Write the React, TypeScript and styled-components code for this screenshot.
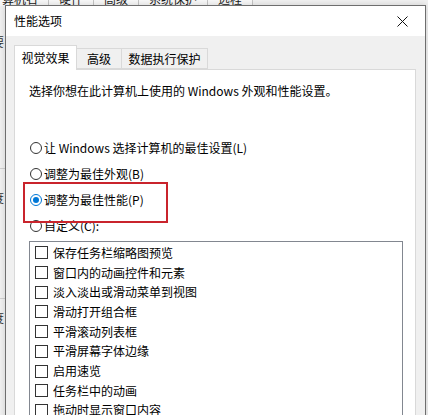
import styled, { createGlobalStyle } from "styled-components";

const GlobalStyle = createGlobalStyle`
  html, body {
    margin: 0;
    padding: 0;
    background: #f0f0f0;
  }
  * {
    box-sizing: border-box;
  }
`;

const FONT = `"Noto Sans CJK SC", "Noto Sans", sans-serif`;

const Desktop = styled.div`
  position: relative;
  width: 428px;
  height: 415px;
  overflow: hidden;
  background: #f0f0f0;
  font-family: ${FONT};
  font-size: 12px;
  color: #000;
`;

/* the system properties window lying behind the dialog */
const BackTabs = styled.div`
  position: absolute;
  top: -9px;
  left: -20px;
  display: flex;
  height: 15px;
`;

const BackTab = styled.div`
  padding: 0 10px;
  line-height: 15px;
  border-right: 1px solid #c4c4c4;
  background: #f7f7f7;
  color: #1a1a1a;
`;

const BackGlyph = styled.span<{ $top: number }>`
  position: absolute;
  left: -8px;
  top: ${({ $top }) => $top}px;
  line-height: 14px;
  color: #333;
`;

const BackEdge = styled.div<{ $top: number }>`
  position: absolute;
  left: 0;
  width: 5px;
  top: ${({ $top }) => $top}px;
  border-top: 1px solid #d0d0d0;
`;

const Dialog = styled.div`
  position: absolute;
  left: 5px;
  top: 5px;
  width: 421px;
  height: 440px;
  border: 1px solid #6e6e6e;
  background: #f0f0f0;
  display: flex;
  flex-direction: column;
  box-shadow: 0 0 6px rgba(0, 0, 0, 0.15);
`;

const TitleBar = styled.div`
  height: 30px;
  flex-shrink: 0;
  background: #fff;
  display: flex;
  align-items: center;
  justify-content: space-between;
  padding-left: 8px;
`;

const Title = styled.span`
  line-height: 16px;
`;

const CloseButton = styled.div`
  width: 46px;
  height: 30px;
  display: flex;
  align-items: center;
  justify-content: center;
`;

const Body = styled.div`
  flex: 1;
  padding: 9px 9px 0 8px;
  display: flex;
  flex-direction: column;
`;

const TabRow = styled.div`
  display: flex;
  align-items: flex-end;
  height: 24px;
  position: relative;
  z-index: 1;
`;

const Tab = styled.div<{ $active?: boolean; $width: number }>`
  width: ${({ $width }) => $width}px;
  height: ${({ $active }) => ($active ? 25 : 21)}px;
  margin-bottom: ${({ $active }) => ($active ? -1 : 0)}px;
  display: flex;
  justify-content: center;
  align-items: ${({ $active }) => ($active ? "flex-start" : "center")};
  padding-top: ${({ $active }) => ($active ? 4 : 0)}px;
  line-height: 16px;
  background: ${({ $active }) => ($active ? "#fff" : "#f0f0f0")};
  border: 1px solid #d9d9d9;
  border-bottom: ${({ $active }) => ($active ? "none" : "1px solid #d9d9d9")};
  margin-left: -1px;
  &:first-child {
    margin-left: 0;
  }
`;

const Panel = styled.div`
  position: relative;
  flex: 1;
  background: #fff;
  border: 1px solid #d9d9d9;
  padding: 13px 12px 0 14px;
`;

const Description = styled.p`
  margin: 0;
  line-height: 16px;
`;

const RadioGroup = styled.div`
  margin-top: 36px;
  display: flex;
  flex-direction: column;
`;

const RadioRow = styled.label`
  height: 26px;
  display: flex;
  align-items: center;
  gap: 2px;
  line-height: 16px;
`;

const RadioCircle = styled.span<{ $checked?: boolean }>`
  width: 12px;
  height: 12px;
  margin-left: 1px;
  border-radius: 50%;
  border: 1px solid ${({ $checked }) => ($checked ? "#0078d7" : "#333")};
  background: #fff;
  display: flex;
  align-items: center;
  justify-content: center;
  flex-shrink: 0;
  &::after {
    content: "";
    width: 6px;
    height: 6px;
    border-radius: 50%;
    background: ${({ $checked }) => ($checked ? "#0078d7" : "transparent")};
  }
`;

const Highlight = styled.div`
  position: absolute;
  left: 8px;
  top: 112px;
  width: 145px;
  height: 41px;
  border: 2px solid #c9242c;
  pointer-events: none;
`;

const ListBox = styled.div`
  margin-top: 2px;
  border: 1px solid #828790;
  height: 200px;
  padding: 1px 0 0 5px;
  display: flex;
  flex-direction: column;
`;

const CheckRow = styled.div`
  height: 20px;
  display: flex;
  align-items: center;
  gap: 5px;
  line-height: 16px;
  white-space: nowrap;
`;

const CheckBox = styled.span`
  width: 13px;
  height: 13px;
  border: 1px solid #333;
  background: #fff;
  flex-shrink: 0;
`;

const backTabs = ["计算机名", "硬件", "高级", "系统保护", "远程"];

const tabs = [
  { label: "视觉效果", width: 63, active: true },
  { label: "高级", width: 46, active: false },
  { label: "数据执行保护", width: 87, active: false },
];

const radios = [
  { label: "让 Windows 选择计算机的最佳设置(L)", checked: false },
  { label: "调整为最佳外观(B)", checked: false },
  { label: "调整为最佳性能(P)", checked: true },
  { label: "自定义(C):", checked: false },
];

const effects = [
  "保存任务栏缩略图预览",
  "窗口内的动画控件和元素",
  "淡入淡出或滑动菜单到视图",
  "滑动打开组合框",
  "平滑滚动列表框",
  "平滑屏幕字体边缘",
  "启用速览",
  "任务栏中的动画",
  "拖动时显示窗口内容",
  "显示缩略图，而不是显示图标",
];

export default function App() {
  return (
    <>
      <GlobalStyle />
      <Desktop>
        <BackTabs>
          {backTabs.map((t) => (
            <BackTab key={t}>{t}</BackTab>
          ))}
        </BackTabs>
        <BackGlyph $top={35}>要</BackGlyph>
        <BackGlyph $top={191}>度</BackGlyph>
        <BackGlyph $top={311}>度</BackGlyph>
        <BackEdge $top={168} />
        <BackEdge $top={298} />

        <Dialog>
          <TitleBar>
            <Title>性能选项</Title>
            <CloseButton>
              <svg width="11" height="11" viewBox="0 0 11 11">
                <path d="M0.5 0.5 L10.5 10.5 M10.5 0.5 L0.5 10.5" stroke="#111" strokeWidth="1" />
              </svg>
            </CloseButton>
          </TitleBar>
          <Body>
            <TabRow>
              {tabs.map((t) => (
                <Tab key={t.label} $active={t.active} $width={t.width}>
                  {t.label}
                </Tab>
              ))}
            </TabRow>
            <Panel>
              <Description>选择你想在此计算机上使用的 Windows 外观和性能设置。</Description>
              <RadioGroup>
                {radios.map((r) => (
                  <RadioRow key={r.label}>
                    <RadioCircle $checked={r.checked} />
                    {r.label}
                  </RadioRow>
                ))}
              </RadioGroup>
              <ListBox>
                {effects.map((e) => (
                  <CheckRow key={e}>
                    <CheckBox />
                    {e}
                  </CheckRow>
                ))}
              </ListBox>
              <Highlight />
            </Panel>
          </Body>
        </Dialog>
      </Desktop>
    </>
  );
}
